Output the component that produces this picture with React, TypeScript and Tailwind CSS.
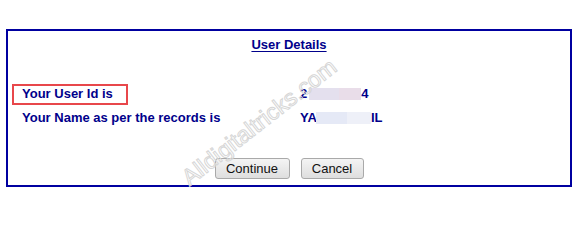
import React from "react";

export default function App() {
  const font = { fontFamily: '"Liberation Sans", Arial, sans-serif' };
  return (
    <div className="w-[576px] h-[236px] bg-white relative overflow-hidden" style={font}>
      <div className="ml-[6px] mt-[29px] w-[566px] h-[158px] border-2 border-[#0000a0] relative flex flex-col">
        <div className="pt-[6px] flex justify-center">
          <span className="text-[13px] leading-[16px] font-bold text-[#00008b] underline underline-offset-[2px]">
            User Details
          </span>
        </div>
        <div className="mt-[33px] flex flex-col gap-[8px] text-[13px] leading-[16px] font-bold text-[#00008b]">
          <div className="flex">
            <div className="w-[292px] pl-[14px]">Your User Id is</div>
            <div className="flex items-center">
              <span>2</span>
              <span className="ml-[2px] w-[30px] h-[12px] bg-[#e4e0ee]" />
              <span className="w-[22px] h-[12px] bg-[#e9dde9]" />
              <span>4</span>
            </div>
          </div>
          <div className="flex">
            <div className="w-[292px] pl-[14px]">Your Name as per the records is</div>
            <div className="flex items-center">
              <span>YA</span>
              <span className="-ml-[1px] w-[31px] h-[12px] bg-[#e5e9f6]" />
              <span className="w-[24px] h-[12px] bg-[#eef0f8]" />
              <span>IL</span>
            </div>
          </div>
        </div>
        <div className="mt-[32px] flex justify-center gap-[11px]">
          <button className="w-[75px] h-[21px] border border-[#a9a9a9] rounded-[3px] bg-gradient-to-b from-[#f4f4f4] to-[#dedede] text-[13px] leading-[16px] text-[#111]">
            Continue
          </button>
          <button className="w-[63px] h-[21px] border border-[#a9a9a9] rounded-[3px] bg-gradient-to-b from-[#f4f4f4] to-[#dedede] text-[13px] leading-[16px] text-[#111]">
            Cancel
          </button>
        </div>
        <div className="absolute left-[4px] top-[53px] w-[116px] h-[21px] border-2 border-[#e8474b] pointer-events-none" />
      </div>
      <div
        className="absolute left-[259px] top-[122px] -translate-x-1/2 -translate-y-1/2 -rotate-[38deg] text-[23px] leading-[26px] text-transparent whitespace-nowrap pointer-events-none [-webkit-text-stroke:1px_#d6d6d6]"
      >
        Alldigitaltricks.com
      </div>
    </div>
  );
}
